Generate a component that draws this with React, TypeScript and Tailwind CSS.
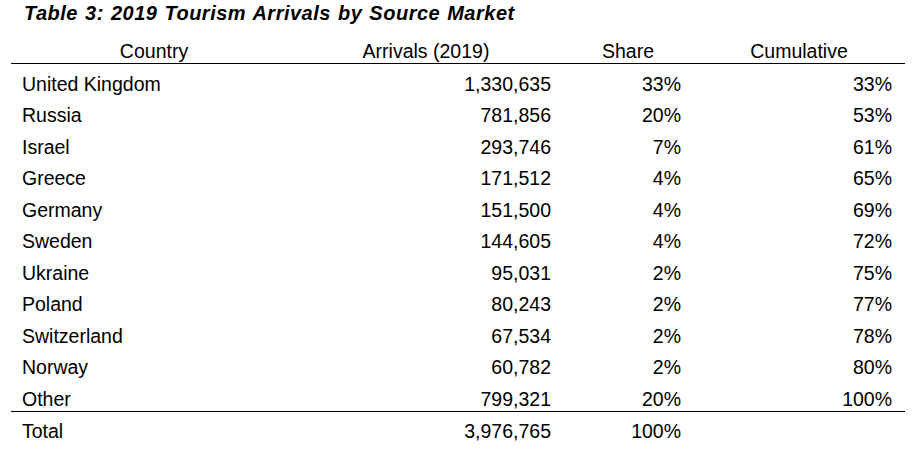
import React from "react";

const rows: [string, string, string, string][] = [
  ["United Kingdom", "1,330,635", "33%", "33%"],
  ["Russia", "781,856", "20%", "53%"],
  ["Israel", "293,746", "7%", "61%"],
  ["Greece", "171,512", "4%", "65%"],
  ["Germany", "151,500", "4%", "69%"],
  ["Sweden", "144,605", "4%", "72%"],
  ["Ukraine", "95,031", "2%", "75%"],
  ["Poland", "80,243", "2%", "77%"],
  ["Switzerland", "67,534", "2%", "78%"],
  ["Norway", "60,782", "2%", "80%"],
];

function Row({ r, last }: { r: [string, string, string, string]; last?: boolean }) {
  return (
    <div
      className={
        "grid grid-cols-[286px_258px_146px_196px] leading-[31.5px] " +
        (last ? "h-[28.5px] border-b border-black" : "h-[31.5px]")
      }
    >
      <div className="pl-[11px] whitespace-nowrap">{r[0]}</div>
      <div className="text-right pr-[4px]">{r[1]}</div>
      <div className="text-right pr-[20px]">{r[2]}</div>
      <div className="text-right pr-[5px]">{r[3]}</div>
    </div>
  );
}

export default function App() {
  return (
    <div
      className="w-[924px] h-[454px] bg-white text-black overflow-hidden"
      style={{ fontFamily: '"Liberation Sans", Arial, sans-serif' }}
    >
      <div className="h-[39px] pt-[1px] pl-[24px]">
        <div className="text-[20px] leading-[24px] font-bold italic tracking-[0.5px] [word-spacing:1px] whitespace-nowrap">
          Table 3: 2019 Tourism Arrivals by Source Market
        </div>
      </div>
      <div className="ml-[11px] w-[894px] text-[19.5px]">
        <div className="grid grid-cols-[286px_258px_146px_196px] h-[25px] leading-[24px] border-b border-black">
          <div className="text-center">Country</div>
          <div className="text-center">Arrivals (2019)</div>
          <div className="text-center">Share</div>
          <div className="text-center">Cumulative</div>
        </div>
        <div className="pt-[4.5px]">
          {rows.map((r) => (
            <Row key={r[0]} r={r} />
          ))}
          <Row r={["Other", "799,321", "20%", "100%"]} last />
        </div>
        <div className="grid grid-cols-[286px_258px_146px_196px] h-[31.5px] leading-[31.5px] mt-[3.5px]">
          <div className="pl-[11px]">Total</div>
          <div className="text-right pr-[4px]">3,976,765</div>
          <div className="text-right pr-[20px]">100%</div>
          <div></div>
        </div>
      </div>
    </div>
  );
}
